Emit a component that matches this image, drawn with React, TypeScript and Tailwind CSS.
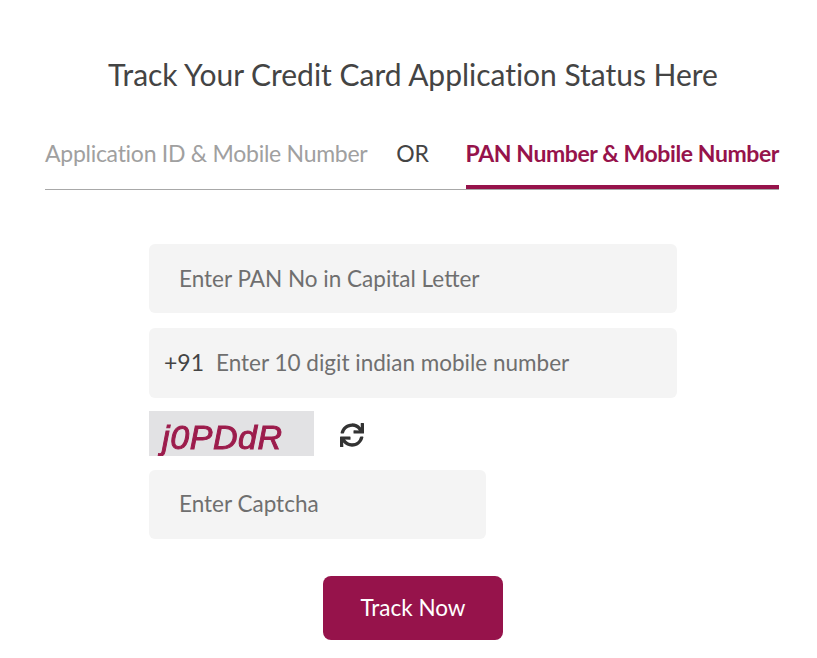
import React from "react"
import { FaSync } from "react-icons/fa"

const fieldClass =
  "bg-[#f4f4f4] rounded-md h-[69px] flex items-center text-[22.5px] text-[#6f6f6f]"

const App = () => {
  return (
    <div className="bg-white h-[658px] overflow-hidden font-['Lato',sans-serif] pl-[45px] pr-[38px]">
      <h1 className="pt-[54px] pl-[2px] h-[129px] text-center text-[30px] leading-[40px] tracking-[-0.02px] text-[#444444]">
        Track Your Credit Card Application Status Here
      </h1>

      <div className="flex justify-between h-[61px] border-b border-[#a8a8a8] text-[23px] leading-[49px] tracking-[-0.27px]">
        <div className="text-[#a0a0a0]">Application ID &amp; Mobile Number</div>
        <div className="text-[#444444] mr-[8px]">OR</div>
        <div className="h-[60px] border-b-[4px] border-[#96134b] text-[#96134b] font-bold tracking-[-0.41px]">
          PAN Number &amp; Mobile Number
        </div>
      </div>

      <div className="ml-[104px] w-[528px] pt-[54px]">
        <div className={fieldClass + " pl-[30px]"}>Enter PAN No in Capital Letter</div>

        <div className={fieldClass + " mt-[15px] h-[70px] pl-[15px] pb-[1px]"}>
          <span className="text-[#444444] text-[23px] mr-[12px]">+91</span>
          Enter 10 digit indian mobile number
        </div>

        <div className="flex items-center mt-[13px]">
          <div className="w-[165px] h-[45px] bg-[#e2e2e4] overflow-hidden pl-[13px] font-['Liberation_Sans',sans-serif] italic text-[34px] leading-[52px] tracking-[0.6px] [-webkit-text-stroke:1px_#9c1c4c] text-[#9c1c4c] blur-[0.5px]">
            j0PDdR
          </div>
          <FaSync className="ml-[26px] mt-[3px] text-[24px] text-[#333333]" />
        </div>

        <div className={fieldClass + " mt-[14px] w-[337px] pl-[30px] pb-[1px]"}>Enter Captcha</div>

        <div className="flex justify-center mt-[37px]">
          <button className="w-[180px] h-[64px] bg-[#96134b] rounded-lg text-white text-[22.5px] pb-[1px]">
            Track Now
          </button>
        </div>
      </div>
    </div>
  )
}

export default App
